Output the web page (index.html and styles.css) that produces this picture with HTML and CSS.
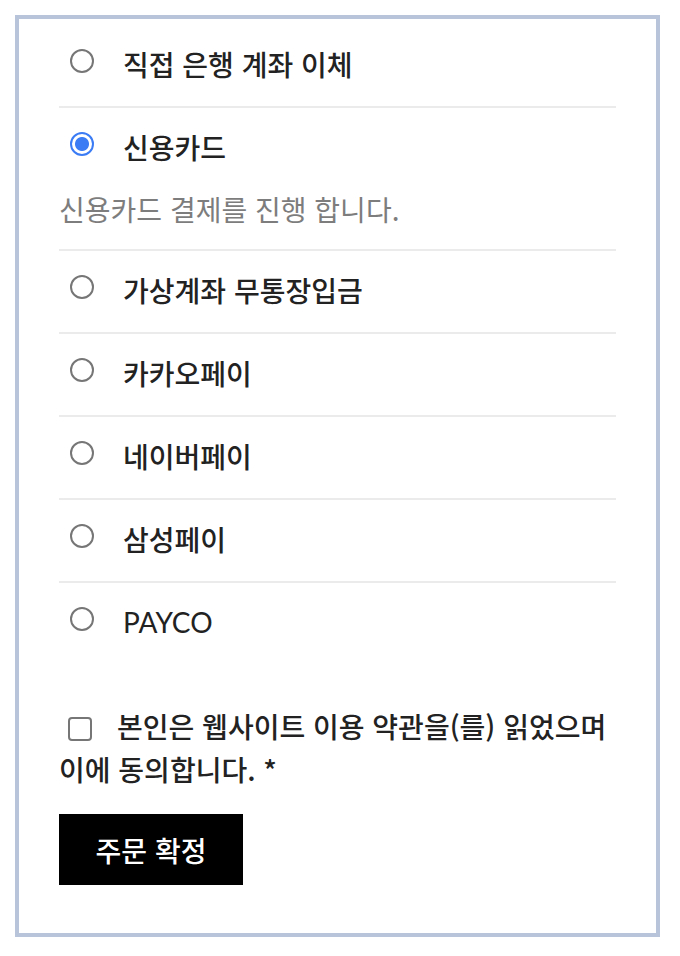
FILE: index.html
```html
<!DOCTYPE html>
<html lang="ko">
<head>
<meta charset="utf-8">
<link rel="stylesheet" href="styles.css">
</head>
<body>
<div class="checkout">
  <ul class="methods">
    <li class="method">
      <label class="method-label"><input type="radio" name="pay" class="radio"><span>직접 은행 계좌 이체</span></label>
    </li>
    <li class="method">
      <label class="method-label"><input type="radio" name="pay" class="radio" checked><span>신용카드</span></label>
      <p class="method-desc">신용카드 결제를 진행 합니다.</p>
    </li>
    <li class="method">
      <label class="method-label"><input type="radio" name="pay" class="radio"><span>가상계좌 무통장입금</span></label>
    </li>
    <li class="method">
      <label class="method-label"><input type="radio" name="pay" class="radio"><span>카카오페이</span></label>
    </li>
    <li class="method">
      <label class="method-label"><input type="radio" name="pay" class="radio"><span>네이버페이</span></label>
    </li>
    <li class="method">
      <label class="method-label"><input type="radio" name="pay" class="radio"><span>삼성페이</span></label>
    </li>
    <li class="method">
      <label class="method-label"><input type="radio" name="pay" class="radio"><span class="latin">PAYCO</span></label>
    </li>
  </ul>
  <p class="terms"><input type="checkbox" class="check"><span>본인은 웹사이트 이용 약관을(를) 읽었으며 이에 동의합니다. *</span></p>
  <button class="submit" type="button">주문 확정</button>
</div>
</body>
</html>
```
FILE: styles.css
```css
html, body {
  margin: 0;
  padding: 0;
  background: #ffffff;
}
body {
  padding: 15px 20px 0 15px;
  font-family: "Noto Sans CJK KR", "Noto Sans", sans-serif;
  color: #222222;
}
.checkout {
  width: 645px;
  height: 922px;
  box-sizing: border-box;
  border: 4px solid #b8c4da;
  padding: 6px 40px 0 40px;
}
.methods {
  list-style: none;
  margin: 0;
  padding: 0;
}
.method {
  padding: 21px 0 27px;
  border-bottom: 2px solid #ebebeb;
}
.method:last-child {
  border-bottom: none;
}
.method-label {
  display: flex;
  align-items: center;
  height: 33px;
  font-size: 28px;
  font-weight: 500;
  letter-spacing: 0;
}
.method-label span {
  position: relative;
  top: 1px;
}
.latin {
  font-family: "Lato", "Open Sans", sans-serif;
  font-weight: 400;
}
.radio {
  appearance: none;
  -webkit-appearance: none;
  width: 24px;
  height: 24px;
  margin: 0 29px 0 11px;
  border: 2px solid #767676;
  border-radius: 50%;
  box-sizing: border-box;
  background: #fff;
  position: relative;
  top: -2px;
}
.radio:checked {
  border-color: #3b7cf5;
  background: radial-gradient(circle, #3b7cf5 0 6.5px, #fff 7.5px);
}
.method-desc {
  margin: 32px 0 -2px 0;
  line-height: 30px;
  font-size: 28px;
  font-weight: 400;
  color: #7d7d7d;
}
.terms {
  margin: 41px 0 0 0;
  font-size: 28px;
  font-weight: 500;
  line-height: 43px;
}
.check {
  appearance: none;
  -webkit-appearance: none;
  width: 24px;
  height: 24px;
  margin: 0 25px 0 9px;
  border: 2px solid #767676;
  border-radius: 4px;
  box-sizing: border-box;
  vertical-align: -3px;
  background: #fff;
}
.submit {
  display: block;
  margin-top: 23px;
  width: 184px;
  height: 71px;
  border: none;
  background: #000000;
  color: #ffffff;
  font-family: "Noto Sans CJK KR", "Noto Sans", sans-serif;
  font-size: 28px;
  font-weight: 500;
  padding: 0;
}
```
